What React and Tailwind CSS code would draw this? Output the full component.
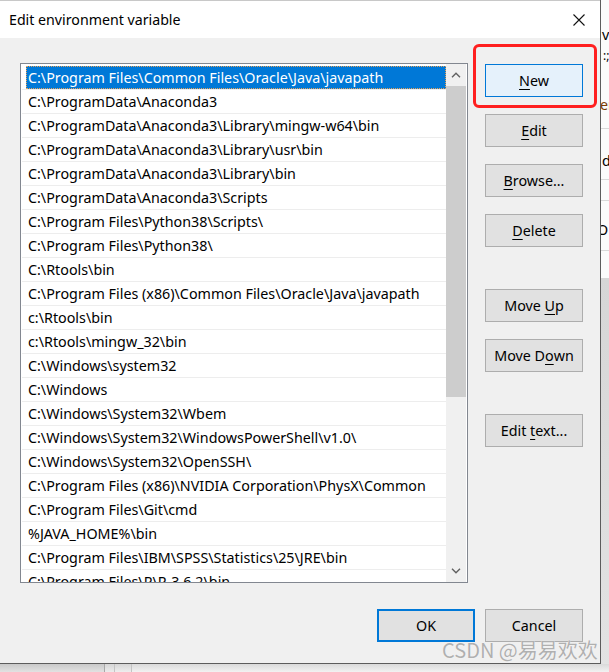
const paths = [
  'C:\\Program Files\\Common Files\\Oracle\\Java\\javapath',
  'C:\\ProgramData\\Anaconda3',
  'C:\\ProgramData\\Anaconda3\\Library\\mingw-w64\\bin',
  'C:\\ProgramData\\Anaconda3\\Library\\usr\\bin',
  'C:\\ProgramData\\Anaconda3\\Library\\bin',
  'C:\\ProgramData\\Anaconda3\\Scripts',
  'C:\\Program Files\\Python38\\Scripts\\',
  'C:\\Program Files\\Python38\\',
  'C:\\Rtools\\bin',
  'C:\\Program Files (x86)\\Common Files\\Oracle\\Java\\javapath',
  'c:\\Rtools\\bin',
  'c:\\Rtools\\mingw_32\\bin',
  'C:\\Windows\\system32',
  'C:\\Windows',
  'C:\\Windows\\System32\\Wbem',
  'C:\\Windows\\System32\\WindowsPowerShell\\v1.0\\',
  'C:\\Windows\\System32\\OpenSSH\\',
  'C:\\Program Files (x86)\\NVIDIA Corporation\\PhysX\\Common',
  'C:\\Program Files\\Git\\cmd',
  '%JAVA_HOME%\\bin',
  'C:\\Program Files\\IBM\\SPSS\\Statistics\\25\\JRE\\bin',
  'C:\\Program Files\\R\\R-3.6.2\\bin',
];

function U({ children }) {
  return <span className="underline decoration-1 underline-offset-[3px]">{children}</span>;
}

function Btn({ children, className = '' }) {
  return (
    <button className={`flex h-[33px] w-[98px] items-center justify-center border text-[14.3px] text-black ${className}`}>
      {children}
    </button>
  );
}

function Chevron({ down }) {
  return (
    <svg width="10" height="6" viewBox="0 0 10 6" className={down ? 'rotate-180' : ''}>
      <path d="M1 5.2 L5 1.2 L9 5.2" fill="none" stroke="#606060" strokeWidth="1.4" />
    </svg>
  );
}

export default function App() {
  return (
    <div className="relative h-[672px] w-[609px] overflow-hidden bg-[#e9e9e9] font-['Noto_Sans',sans-serif]">
      <div className="flex h-[664px]">
        {/* dialog */}
        <div className="flex w-[601px] flex-col border-r border-b border-[#5c5c5c] bg-[#f0f0f0]">
          <div className="flex h-[38px] items-center justify-between border-t border-[#c8c8c8] bg-white pl-[9px] pr-[15px]">
            <span className="text-[14.2px] text-black">Edit environment variable</span>
            <svg width="12" height="12" viewBox="0 0 12 12">
              <path d="M0.5 0.5 L11.5 11.5 M11.5 0.5 L0.5 11.5" stroke="#111" strokeWidth="1.1" />
            </svg>
          </div>

          <div className="flex flex-1 flex-col pl-[20px] pr-[17px] pt-[25px]">
            <div className="flex gap-[17px]">
              <div className="flex h-[520px] w-[448px] overflow-hidden border border-[#828790] bg-white pr-[1px]">
                <div className="flex-1 overflow-hidden pl-[1px] pt-[2px]">
                  {paths.map((p, i) => (
                    <div key={p} className="h-[24px] border-b border-[#ededed]">
                      {i === 0 ? (
                        <div className="ml-[4px] flex h-[23px] items-center whitespace-nowrap bg-[#0078d7] pl-[2px] pt-[1px] text-[14.3px] leading-none text-white outline outline-1 -outline-offset-1 outline-dotted outline-[#e6a25a]">
                          {p}
                        </div>
                      ) : (
                        <div className="flex h-[23px] items-center whitespace-nowrap pl-[6px] pt-[1px] text-[14.3px] leading-none text-black">
                          {p}
                        </div>
                      )}
                    </div>
                  ))}
                </div>
                <div className="flex w-[20px] flex-col bg-[#f0f0f0]">
                  <div className="flex h-[22px] items-center justify-center">
                    <Chevron />
                  </div>
                  <div className="h-[311px] bg-[#cdcdcd]" />
                  <div className="flex-1" />
                  <div className="flex h-[22px] items-center justify-center">
                    <Chevron down />
                  </div>
                </div>
              </div>

              <div className="flex flex-col pt-[1px]">
                <Btn className="border-[#0078d7] bg-[#e5f1fb]">
                  <U>N</U>ew
                </Btn>
                <Btn className="mt-[17px] border-[#adadad] bg-[#e1e1e1]">
                  <U>E</U>dit
                </Btn>
                <Btn className="mt-[17px] border-[#adadad] bg-[#e1e1e1]">
                  <U>B</U>rowse...
                </Btn>
                <Btn className="mt-[17px] border-[#adadad] bg-[#e1e1e1]">
                  <U>D</U>elete
                </Btn>
                <Btn className="mt-[42px] border-[#adadad] bg-[#e1e1e1]">
                  Move&nbsp;<U>U</U>p
                </Btn>
                <Btn className="mt-[17px] border-[#adadad] bg-[#e1e1e1]">
                  Move D<U>o</U>wn
                </Btn>
                <Btn className="mt-[42px] border-[#adadad] bg-[#e1e1e1]">
                  Edit&nbsp;<U>t</U>ext...
                </Btn>
              </div>
            </div>

            <div className="mt-[26px] flex justify-end gap-[10px]">
              <Btn className="border-2 border-[#0078d7] bg-[#e1e1e1]">OK</Btn>
              <Btn className="border-[#adadad] bg-[#e1e1e1]">Cancel</Btn>
            </div>
          </div>
        </div>

        {/* window behind, right edge */}
        <div className="relative flex-1 overflow-hidden">
          <div className="flex h-[278px] flex-col bg-[#fbfbfb] text-[14.3px] leading-none text-black">
            <div className="h-[28px]" />
            <span className="h-[22px] whitespace-nowrap pl-[1px]">va</span>
            <span className="h-[48px] whitespace-nowrap pl-[2px] text-[12px]">:;</span>
            <span className="h-[30px] whitespace-nowrap -ml-[1px] text-[#7a3a00]">er</span>
            <div className="h-[26px] border-t border-[#d9d9d9]" />
            <span className="h-[25px] whitespace-nowrap pl-[1px]">d_</span>
            <div className="h-[21px] border-t border-[#d9d9d9]" />
            <div className="h-[50px] border-t border-[#d9d9d9] pt-[22px] -ml-[4px]">OK</div>
            <div className="flex-1 border-t border-[#d9d9d9]" />
          </div>
          <div className="h-full bg-gradient-to-b from-[#d6d6d6] to-[#ececec]" />
        </div>
      </div>

      {/* window behind, bottom edge */}
      <div className="flex h-[8px]">
        <div className="w-[105px] border-r border-[#a8a8a8] bg-gradient-to-b from-[#c9c9c9] to-[#e2e2e2]" />
        <div className="w-[10px] border-r border-[#c4c4c4] bg-gradient-to-b from-[#d6d6d6] to-[#ececec]" />
        <div className="w-[17px] border-r border-[#c4c4c4] bg-gradient-to-b from-[#d6d6d6] to-[#eeeeee]" />
        <div className="flex-1 bg-gradient-to-b from-[#dadada] to-[#f2f2f2]" />
      </div>

      {/* red annotation */}
      <div className="absolute left-[473px] top-[44px] h-[64px] w-[124px] rounded-[6px] border-[3px] border-[#ff1f1f]" />

      {/* watermark */}
      <div className="absolute left-[442px] top-[640px] whitespace-nowrap font-['Noto_Sans_CJK_SC',sans-serif] text-[20px] leading-none text-[#b0b0b0] [text-shadow:0_0_1px_#ffffff]">
        CSDN @易易欢欢
      </div>
    </div>
  );
}
